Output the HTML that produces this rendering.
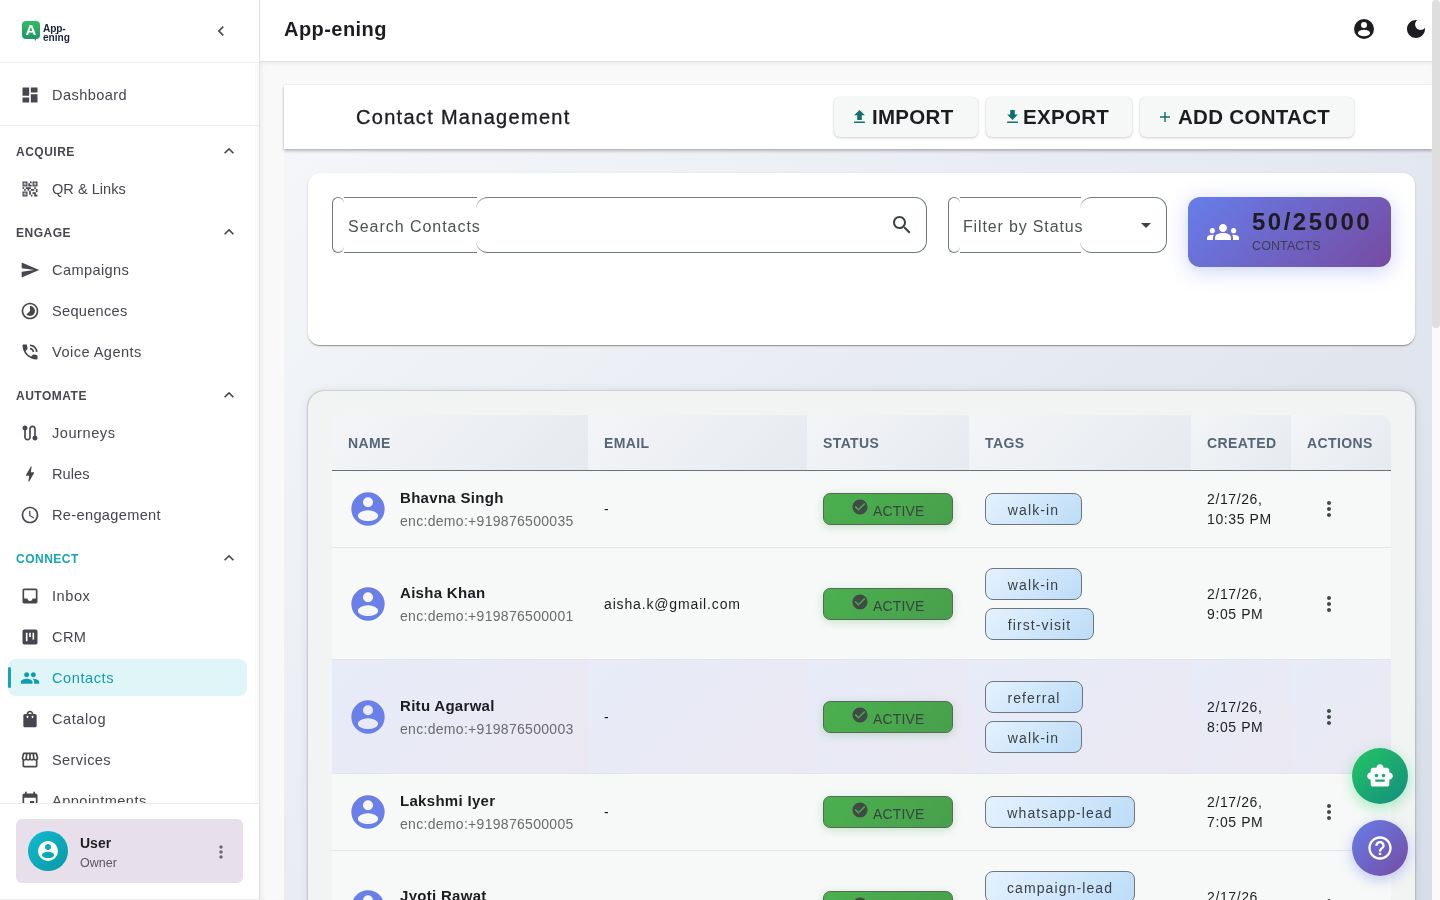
<!DOCTYPE html>
<html><head><meta charset="utf-8">
<style>
*{box-sizing:border-box;margin:0;padding:0}
html,body{width:1440px;height:900px;overflow:hidden;background:#fff;font-family:"Liberation Sans",sans-serif;}
svg{display:block}
.a{position:absolute}
#sb{position:absolute;left:0;top:0;width:260px;height:900px;background:#fff;border-right:1px solid #e2e2e2;overflow:hidden}
.it{position:absolute;left:0;width:259px;height:20px;color:#47454e;font-size:14.6px;line-height:20px;letter-spacing:0.3px}
.it svg{position:absolute;left:20px;top:0;width:20px;height:20px;fill:#47454e}
.it span{position:absolute;left:52px;top:0;white-space:nowrap}
.sec{position:absolute;left:16px;height:20px;line-height:22px;font-size:12px;font-weight:bold;letter-spacing:0.5px;color:#47454e}
.sec svg{position:absolute;left:203px;top:0px;width:20px;height:20px;fill:#47454e}
#main{position:absolute;left:260px;top:0;width:1172px;height:900px;background:#f9f9f9;overflow:hidden}
#hdr{position:absolute;left:0;top:0;width:1172px;height:62px;background:#fff;border-bottom:1px solid #e0e0e0}
#bg{position:absolute;left:24px;top:149px;width:1148px;height:751px;background:linear-gradient(135deg,#f4f6f9 0%,#d8dee9 100%)}
#cm{position:absolute;left:24px;top:85px;width:1148px;height:64px;background:#fff;box-shadow:0 2px 3px rgba(0,0,0,0.25),0 0 1px rgba(0,0,0,0.2)}
.btn{position:absolute;top:12px;height:40px;border-radius:6px;background:#f6f8f7;box-shadow:0 1px 3px rgba(0,0,0,0.18),0 0 1px rgba(0,0,0,0.12);font-size:20.5px;font-weight:bold;color:#1d1c21;letter-spacing:0.3px;line-height:39px}
.btn svg{position:absolute;fill:#0e6f6e}
.card{position:absolute;background:#fff;border-radius:12px;box-shadow:0px 2px 1px -1px rgba(0,0,0,0.2),0px 1px 1px 0px rgba(0,0,0,0.14),0px 1px 3px 0px rgba(0,0,0,0.12)}
.ol{position:absolute;border:1px solid #6f7b7a}
.th{position:absolute;top:0;height:55px;background:linear-gradient(135deg,#f3f5f8 0%,#e6e9ee 100%);font-size:14px;font-weight:bold;color:#556677;letter-spacing:0.4px;line-height:57px;padding-left:16px}
.row{position:absolute;left:0;width:1059px;border-bottom:1px solid #e2e5ec;background:#f7f9f8}
.av{position:absolute;left:16px;width:40px;height:40px;fill:#6a7fe7}
.nm{position:absolute;left:68px;font-size:15px;font-weight:bold;color:#1d1c21;letter-spacing:0.3px;white-space:nowrap}
.ph{position:absolute;left:68px;font-size:14px;color:#6b6b6b;letter-spacing:0.3px;white-space:nowrap}
.em{position:absolute;left:272px;font-size:14px;color:#1d1c21;letter-spacing:0.85px;white-space:nowrap}
.st{position:absolute;left:491px;width:130px;height:32px;border-radius:7px;background:linear-gradient(135deg,#4bb04e 0%,#47a04b 100%);border:1px solid #5f6360;box-shadow:0 2px 8px rgba(76,175,80,0.3)}
.st svg{position:absolute;left:27px;top:4px;width:18px;height:18px;fill:#424a48}
.st span{position:absolute;left:49px;top:9px;font-size:14px;line-height:16px;color:#3b4342;letter-spacing:0.15px}
.tg{position:absolute;left:653px;height:32px;border-radius:8px;border:1px solid #6b777d;background:linear-gradient(135deg,#e5f2fd 0%,#bcdcf8 100%);font-size:14px;color:#3a3f44;letter-spacing:1.1px;line-height:32px;text-align:center}
.dt{position:absolute;left:875px;font-size:14px;line-height:20px;color:#1d1c21;letter-spacing:0.6px;white-space:nowrap}
.mv{position:absolute;left:985px;width:24px;height:24px;fill:#404947}
</style></head><body><div style="position:absolute;left:0;top:0;width:1440px;height:900px;will-change:transform">
<!-- SIDEBAR -->
<div id="sb">
  <div class="a" style="left:0;top:0;width:259px;height:63px;border-bottom:1px solid #efefef"></div>
  <!-- logo -->
  <div class="a" style="left:22px;top:21px;width:18px;height:18px;border-radius:4px;background:linear-gradient(180deg,#33bb62,#1f9668)"></div>
  <div class="a" style="left:31px;top:35px;width:0;height:0;border-left:5px solid transparent;border-top:6px solid #1f9668"></div>
  <div class="a" style="left:22px;top:21px;width:18px;height:18px;color:#fff;font-weight:bold;font-size:15px;line-height:18px;text-align:center">A</div>
  <div class="a" style="left:43px;top:22px;font-size:12px;line-height:14px;font-weight:bold;color:#1a2340;letter-spacing:-0.2px;transform:scale(0.85,0.95);transform-origin:0 0">App-</div><div class="a" style="left:43px;top:30.5px;font-size:12px;line-height:14px;font-weight:bold;color:#1a2340;letter-spacing:-0.1px;transform:scale(0.85,0.95);transform-origin:0 0">ening</div>
  <svg class="a" style="left:211px;top:21px;width:20px;height:20px;fill:#465050" viewBox="0 0 24 24"><path d="M15.41 7.41L14 6l-6 6 6 6 1.41-1.41L10.83 12z"/></svg>

  <div class="a" style="left:255px;top:64px;width:4px;height:739px;background:#fafafa"></div>
  <div class="it" style="top:85px"><svg viewBox="0 0 24 24"><path d="M3 13h8V3H3v10zm0 8h8v-6H3v6zm10 0h8V11h-8v10zm0-18v6h8V3h-8z"/></svg><span style="letter-spacing:0.4px">Dashboard</span></div>
  <div class="a" style="left:0;top:125px;width:259px;height:1px;background:#ececec"></div>

  <div class="sec" style="top:141px">ACQUIRE<svg viewBox="0 0 24 24"><path d="M12 8l-6 6 1.41 1.41L12 10.83l4.59 4.58L18 14z"/></svg></div>
  <div class="it" style="top:179px"><svg viewBox="0 0 24 24"><path d="M15 21h-2v-2h2v2zm-2-7h-2v5h2v-5zm8-2h-2v4h2v-4zm-2-2h-2v2h2v-2zM7 12H5v2h2v-2zm-2-2H3v2h2v-2zm7-5h2V3h-2v2zm-7.5-.5v3h3v-3h-3zM9 9H3V3h6v6zm-4.5 7.5v3h3v-3h-3zM9 21H3v-6h6v6zm7.5-16.5v3h3v-3h-3zM21 9h-6V3h6v6zm-2 10v-3h-4v2h2v3h4v-2h-2zm-2-7h-4v2h4v-2zm-4-2H7v2h2v2h2v-2h2v-2zm1-1V7h-2V5h-2v4h4zM6.75 5.25h-1.5v1.5h1.5v-1.5zm0 12h-1.5v1.5h1.5v-1.5zm12-12h-1.5v1.5h1.5v-1.5z"/></svg><span style="letter-spacing:0px">QR &amp; Links</span></div>

  <div class="sec" style="top:222px">ENGAGE<svg viewBox="0 0 24 24"><path d="M12 8l-6 6 1.41 1.41L12 10.83l4.59 4.58L18 14z"/></svg></div>
  <div class="it" style="top:260px"><svg viewBox="0 0 24 24"><path d="M2.01 21L23 12 2.01 3 2 10l15 2-15 2z"/></svg><span style="letter-spacing:0.37px">Campaigns</span></div>
  <div class="it" style="top:301px"><svg viewBox="0 0 24 24"><path d="M16.24 7.76C15.07 6.59 13.54 6 12 6v6l-4.24 4.24c2.34 2.34 6.14 2.34 8.49 0 2.34-2.34 2.34-6.14-.01-8.48zM12 2C6.48 2 2 6.48 2 12s4.48 10 10 10 10-4.48 10-10S17.52 2 12 2zm0 18c-4.42 0-8-3.58-8-8s3.58-8 8-8 8 3.58 8 8-3.58 8-8 8z"/></svg><span style="letter-spacing:0.28px">Sequences</span></div>
  <div class="it" style="top:342px"><svg viewBox="0 0 24 24"><path d="M20 15.5c-1.25 0-2.45-.2-3.57-.57-.35-.11-.74-.03-1.02.24l-2.2 2.2c-2.83-1.44-5.15-3.75-6.59-6.59l2.2-2.21c.28-.26.36-.65.25-1C8.7 6.45 8.5 5.25 8.5 4c0-.55-.45-1-1-1H4c-.55 0-1 .45-1 1 0 9.39 7.61 17 17 17 .55 0 1-.45 1-1v-3.5c0-.55-.45-1-1-1zM19 12h2c0-4.97-4.03-9-9-9v2c3.87 0 7 3.13 7 7zm-4 0h2c0-2.76-2.24-5-5-5v2c1.66 0 3 1.34 3 3z"/></svg><span style="letter-spacing:0.45px">Voice Agents</span></div>

  <div class="sec" style="top:385px">AUTOMATE<svg viewBox="0 0 24 24"><path d="M12 8l-6 6 1.41 1.41L12 10.83l4.59 4.58L18 14z"/></svg></div>
  <div class="it" style="top:423px"><svg viewBox="0 0 24 24"><path d="M19 15.18V7c0-2.21-1.79-4-4-4s-4 1.79-4 4v10c0 1.1-.9 2-2 2s-2-.9-2-2V8.82C8.16 8.4 9 7.3 9 6c0-1.66-1.34-3-3-3S3 4.34 3 6c0 1.3.84 2.4 2 2.82V17c0 2.21 1.79 4 4 4s4-1.79 4-4V7c0-1.1.9-2 2-2s2 .9 2 2v8.18c-1.16.41-2 1.51-2 2.82 0 1.66 1.34 3 3 3s3-1.34 3-3c0-1.3-.84-2.4-2-2.82z"/></svg><span style="letter-spacing:0.53px">Journeys</span></div>
  <div class="it" style="top:464px"><svg viewBox="0 0 24 24"><path d="M11 21h-1l1-7H7.5c-.58 0-.57-.32-.38-.66.19-.34.05-.08.07-.12C8.48 10.94 10.42 7.54 13 3h1l-1 7h3.5c.49 0 .56.33.47.51l-.07.15C12.96 17.55 11 21 11 21z"/></svg><span style="letter-spacing:0.06px">Rules</span></div>
  <div class="it" style="top:505px"><svg viewBox="0 0 24 24"><path d="M11.99 2C6.47 2 2 6.48 2 12s4.47 10 9.99 10C17.52 22 22 17.52 22 12S17.52 2 11.99 2zM12 20c-4.42 0-8-3.58-8-8s3.58-8 8-8 8 3.58 8 8-3.58 8-8 8zm.5-13H11v6l5.25 3.15.75-1.23-4.5-2.67z"/></svg><span style="letter-spacing:0.33px">Re-engagement</span></div>

  <div class="sec" style="top:548px;color:#14a6b8;letter-spacing:0.5px">CONNECT<svg viewBox="0 0 24 24"><path d="M12 8l-6 6 1.41 1.41L12 10.83l4.59 4.58L18 14z"/></svg></div>
  <div class="it" style="top:586px"><svg viewBox="0 0 24 24"><path d="M19 3H4.99c-1.11 0-1.98.89-1.98 2L3 19c0 1.1.88 2 1.99 2H19c1.1 0 2-.9 2-2V5c0-1.11-.9-2-2-2zm0 12h-4c0 1.66-1.35 3-3 3s-3-1.34-3-3H4.99V5H19v10z"/></svg><span style="letter-spacing:0.55px">Inbox</span></div>
  <div class="it" style="top:627px"><svg viewBox="0 0 24 24"><path d="M19 3H5c-1.1 0-2 .9-2 2v14c0 1.1.9 2 2 2h14c1.1 0 2-.9 2-2V5c0-1.1-.9-2-2-2zM9 17H7V7h2v10zm4-5h-2V7h2v5zm4 3h-2V7h2v8z"/></svg><span style="letter-spacing:0.37px">CRM</span></div>
  <div class="a" style="left:8px;top:659px;width:239px;height:37px;border-radius:8px;background:#e0f5f8"></div>
  <div class="a" style="left:8px;top:667px;width:3px;height:21px;border-radius:2px;background:#14a6b8"></div>
  <div class="it" style="top:668px;color:#0f9db0"><svg viewBox="0 0 24 24" style="fill:#0f9db0"><path d="M16 11c1.66 0 2.99-1.34 2.99-3S17.66 5 16 5c-1.66 0-3 1.34-3 3s1.34 3 3 3zm-8 0c1.66 0 2.99-1.34 2.99-3S9.66 5 8 5C6.34 5 5 6.34 5 8s1.34 3 3 3zm0 2c-2.33 0-7 1.17-7 3.5V19h14v-2.5c0-2.33-4.67-3.5-7-3.5zm8 0c-.29 0-.62.02-.97.05 1.16.84 1.97 1.970 1.97 3.45V19h6v-2.5c0-2.33-4.67-3.5-7-3.5z"/></svg><span style="letter-spacing:0.55px">Contacts</span></div>
  <div class="it" style="top:709px"><svg viewBox="0 0 24 24"><path fill-rule="evenodd" d="M18 6h-2c0-2.21-1.79-4-4-4S8 3.79 8 6H6c-1.1 0-2 .9-2 2v12c0 1.1.9 2 2 2h12c1.1 0 2-.9 2-2V8c0-1.1-.9-2-2-2zm-8 4c0 .55-.45 1-1 1s-1-.45-1-1V8h2v2zm2-6c1.1 0 2 .9 2 2h-4c0-1.1.9-2 2-2zm4 6c0 .55-.45 1-1 1s-1-.45-1-1V8h2v2z"/></svg><span style="letter-spacing:0.55px">Catalog</span></div>
  <div class="it" style="top:750px"><svg viewBox="0 0 24 24"><path d="M21.9 8.89l-1.05-4.37c-.22-.9-1-1.52-1.91-1.52H5.05c-.9 0-1.69.63-1.9 1.52L2.1 8.89c-.24 1.02-.02 2.06.62 2.88.08.11.19.19.28.29V19c0 1.1.9 2 2 2h14c1.1 0 2-.9 2-2v-6.94c.09-.09.2-.18.28-.28.64-.82.87-1.87.62-2.89zm-2.99-3.9l1.05 4.37c.1.42.01.84-.25 1.17-.14.18-.44.47-.94.47-.61 0-1.14-.49-1.21-1.14L16.98 5l1.93-.01zM13 5h1.96l.54 4.52c.05.39-.07.78-.33 1.070-.22.26-.54.41-.95.41-.67 0-1.22-.59-1.22-1.31V5zM8.49 9.52L9.04 5H11v4.69c0 .72-.55 1.31-1.29 1.31-.34 0-.65-.15-.89-.41-.25-.29-.37-.68-.33-1.07zm-4.45-.16L5.05 5h1.97l-.58 4.86c-.08.65-.6 1.14-1.21 1.14-.49 0-.8-.29-.93-.47-.27-.32-.36-.75-.26-1.17zM5 19v-6.03c.08.01.15.03.23.03.87 0 1.66-.36 2.24-.95.6.6 1.4.95 2.31.95.87 0 1.65-.36 2.23-.93.59.57 1.39.93 2.29.93.84 0 1.64-.35 2.24-.95.58.59 1.37.95 2.24.95.08 0 .15-.02.23-.03V19H5z"/></svg><span style="letter-spacing:0.38px">Services</span></div>
  <div class="it" style="top:791px"><svg viewBox="0 0 24 24"><path d="M17 12h-5v5h5v-5zM16 1v2H8V1H6v2H5c-1.11 0-1.99.9-1.99 2L3 19c0 1.1.89 2 2 2h14c1.1 0 2-.9 2-2V5c0-1.1-.9-2-2-2h-1V1h-2zm3 18H5V8h14v11z"/></svg><span style="letter-spacing:0.45px">Appointments</span></div>

  <!-- footer -->
  <div class="a" style="left:0;top:803px;width:259px;height:97px;background:#fff;border-top:1px solid #ececec"></div>
  <div class="a" style="left:16px;top:819px;width:227px;height:64px;border-radius:6px;background:#e7dfea"></div>
  <div class="a" style="left:0;top:899px;width:259px;height:1px;background:#ececec"></div>
  <div class="a" style="left:28px;top:831px;width:40px;height:40px;border-radius:50%;background:linear-gradient(135deg,#10bccf,#0a97a6)"></div>
  <svg class="a" style="left:36px;top:839px;width:24px;height:24px;fill:#fff" viewBox="0 0 24 24"><path fill-rule="evenodd" d="M2 12a10 10 0 1 0 20 0a10 10 0 1 0 -20 0zM9 7.9a3 3 0 1 0 6 0a3 3 0 1 0 -6 0zM5.9 16a6.1 3.2 0 1 0 12.2 0a6.1 3.2 0 1 0 -12.2 0z"/></svg>
  <div class="a" style="left:80px;top:836px;font-size:14px;font-weight:bold;color:#1d1c21;line-height:14px">User</div>
  <div class="a" style="left:80px;top:856px;font-size:12.5px;color:#5b5962;line-height:14px">Owner</div>
  <svg class="a" style="left:211px;top:842px;width:20px;height:20px;fill:#6b6970" viewBox="0 0 24 24"><path d="M12 8c1.1 0 2-.9 2-2s-.9-2-2-2-2 .9-2 2 .9 2 2 2zm0 2c-1.1 0-2 .9-2 2s.9 2 2 2 2-.9 2-2-.9-2-2-2zm0 6c-1.1 0-2 .9-2 2s.9 2 2 2 2-.9 2-2-.9-2-2-2z"/></svg>
</div>

<!-- MAIN -->
<div id="main">
  <div id="hdr">
    <div class="a" style="left:24px;top:18px;font-size:20px;font-weight:bold;color:#1d1c21;line-height:22px;letter-spacing:0.45px">App-ening</div>
    <svg class="a" style="left:1092px;top:17px;width:24px;height:24px;fill:#1d1c21" viewBox="0 0 24 24"><path fill-rule="evenodd" d="M2 12a10 10 0 1 0 20 0a10 10 0 1 0 -20 0zM9 7.9a3 3 0 1 0 6 0a3 3 0 1 0 -6 0zM5.9 16a6.1 3.2 0 1 0 12.2 0a6.1 3.2 0 1 0 -12.2 0z"/></svg>
    <svg class="a" style="left:1144px;top:17px;width:24px;height:24px;fill:#1d1c21" viewBox="0 0 24 24"><path d="M12 3c-4.97 0-9 4.03-9 9s4.030 9 9 9 9-4.03 9-9c0-.46-.04-.92-.1-1.36-.98 1.37-2.58 2.26-4.4 2.26-2.98 0-5.4-2.42-5.4-5.4 0-1.81.89-3.42 2.26-4.4-.44-.06-.9-.1-1.36-.1z"/></svg>
  </div>
  <div class="a" style="left:0;top:62px;width:1172px;height:838px;box-shadow:inset 2px 2px 4px rgba(0,0,0,0.05)"></div>
  <div id="bg"></div>
  <div id="cm">
    <div class="a" style="left:72px;top:21px;font-size:20px;color:#1d1c21;letter-spacing:1.3px;line-height:22px;-webkit-text-stroke:0.35px #1d1c21">Contact Management</div>
    <div class="btn" style="left:550px;width:144px"><svg style="left:19px;top:13px;width:13px;height:13px" viewBox="5 3 14 17"><path d="M5 20h14v-2H5v2zm0-10h4v6h6v-6h4l-7-7-7 7z"/></svg><span class="a" style="left:38px;top:0">IMPORT</span></div>
    <div class="btn" style="left:702px;width:146px"><svg style="left:20px;top:13px;width:13px;height:13px" viewBox="5 3 14 17"><path d="M19 9h-4V3H9v6H5l7 7 7-7zM5 18v2h14v-2H5z"/></svg><span class="a" style="left:37px;top:0">EXPORT</span></div>
    <div class="btn" style="left:856px;width:214px"><svg style="left:20px;top:15px;width:10px;height:10px" viewBox="5 5 14 14"><path d="M19 13h-6v6h-2v-6H5v-2h6V5h2v6h6v2z"/></svg><span class="a" style="left:38px;top:0">ADD CONTACT</span></div>
  </div>

  <!-- search card -->
  <div class="card" style="left:48px;top:173px;width:1107px;height:172px"><div class="a" style="left:-1px;top:-1px;width:1107px;height:173px">
    <!-- search outline -->
    <div class="ol" style="left:25px;top:25px;width:12px;height:56px;border-right:none;border-radius:7px"></div>
    <div class="ol" style="left:37px;top:25px;width:133px;height:56px;border-left:none;border-right:none;border-radius:0"></div>
    <div class="ol" style="left:169px;top:25px;width:451px;height:56px;border-left:none;border-radius:12px"></div>
    <div class="a" style="left:41px;top:46px;font-size:16px;color:#4a5352;letter-spacing:0.97px;line-height:18px">Search Contacts</div>
    <svg class="a" style="left:583px;top:41px;width:24px;height:24px;fill:#3b4443" viewBox="0 0 24 24"><path d="M15.5 14h-.79l-.28-.27C15.41 12.59 16 11.11 16 9.5 16 5.91 13.09 3 9.5 3S3 5.910 3 9.5 5.91 16 9.5 16c1.61 0 3.09-.59 4.23-1.57l.27.28v.79l5 4.99L20.49 19l-4.99-5zm-6 0C7.01 14 5 11.99 5 9.5S7.01 5 9.5 5 14 7.01 14 9.5 11.99 14 9.5 14z"/></svg>
    <!-- filter outline -->
    <div class="ol" style="left:641px;top:25px;width:12px;height:56px;border-right:none;border-radius:7px"></div>
    <div class="ol" style="left:653px;top:25px;width:121px;height:56px;border-left:none;border-right:none;border-radius:0"></div>
    <div class="ol" style="left:773px;top:25px;width:87px;height:56px;border-left:none;border-radius:12px"></div>
    <div class="a" style="left:656px;top:46px;font-size:16px;color:#4a5352;letter-spacing:0.85px;line-height:18px">Filter by Status</div>
    <svg class="a" style="left:827px;top:41px;width:24px;height:24px;fill:#3b4443" viewBox="0 0 24 24"><path d="M7 10l5 5 5-5z"/></svg>
    <!-- contacts badge -->
    <div class="a" style="left:881px;top:25px;width:203px;height:70px;border-radius:12px;background:linear-gradient(135deg,#667eea 0%,#764ba2 100%);box-shadow:0 4px 20px rgba(102,126,234,0.35)">
      <svg class="a" style="left:19px;top:19px;width:32px;height:32px;fill:#fff" viewBox="0 0 24 24"><path d="M12 12.75c1.63 0 3.07.39 4.24.9 1.08.48 1.76 1.56 1.76 2.73V18H6v-1.61c0-1.18.68-2.26 1.76-2.73 1.17-.52 2.61-.91 4.24-.91zM4 13c1.1 0 2-.9 2-2s-.9-2-2-2-2 .9-2 2 .9 2 2 2zm1.13 1.1c-.37-.06-.74-.1-1.13-.1-.99 0-1.930.21-2.78.58C.48 14.9 0 15.62 0 16.43V18h4.5v-1.61c0-.83.23-1.61.63-2.29zM20 13c1.1 0 2-.9 2-2s-.9-2-2-2-2 .9-2 2 .9 2 2 2zm4 3.43c0-.81-.48-1.53-1.22-1.85-.85-.37-1.79-.58-2.78-.58-.39 0-.76.04-1.13.1.4.68.63 1.46.63 2.29V18H24v-1.57zM12 6c1.66 0 3 1.34 3 3s-1.34 3-3 3-3-1.34-3-3 1.34-3 3-3z"/></svg>
      <div class="a" style="left:64px;top:12px;font-size:24px;font-weight:bold;color:#1d1c21;letter-spacing:2.5px;line-height:26px">50/25000</div>
      <div class="a" style="left:64px;top:42.5px;font-size:12.5px;color:#3f3d55;letter-spacing:0.1px;line-height:12px">CONTACTS</div>
    </div>
  </div></div>

  <!-- table card -->
  <div class="card" style="left:48px;top:391px;width:1107px;height:600px;background:#f2f4f3;border-radius:16px;box-shadow:0 0 1.5px rgba(0,0,0,0.45),0 0 10px rgba(0,0,0,0.1),0 2px 3px rgba(0,0,0,0.08)">
    <div class="a" style="left:24px;top:24px;width:1059px;height:600px;overflow:hidden">
      <div class="a" style="left:0;top:0;width:1059px;height:56px;border-radius:12px 12px 0 0;overflow:hidden;border-bottom:1px solid #66737a">
        <div class="th" style="left:0;width:256px">NAME</div>
        <div class="th" style="left:256px;width:219px">EMAIL</div>
        <div class="th" style="left:475px;width:162px">STATUS</div>
        <div class="th" style="left:637px;width:222px">TAGS</div>
        <div class="th" style="left:859px;width:100px">CREATED</div>
        <div class="th" style="left:959px;width:100px">ACTIONS</div>
      </div>
      <div id="rows"><div class="row" style="top:56px;height:77px"><svg class="av" style="top:18px" viewBox="0 0 24 24"><path fill-rule="evenodd" d="M2 12a10 10 0 1 0 20 0a10 10 0 1 0 -20 0zM9 7.9a3 3 0 1 0 6 0a3 3 0 1 0 -6 0zM5.9 16a6.1 3.2 0 1 0 12.2 0a6.1 3.2 0 1 0 -12.2 0z"/></svg><div class="nm" style="top:18px;line-height:18px">Bhavna Singh</div><div class="ph" style="top:42px;line-height:16px">enc:demo:+919876500035</div><div class="em" style="top:30px;line-height:16px">-</div><div class="st" style="top:22px"><svg viewBox="0 0 24 24"><path d="M12 2C6.48 2 2 6.48 2 12s4.48 10 10 10 10-4.48 10-10S17.52 2 12 2zm-2 15l-5-5 1.41-1.41L10 14.17l7.59-7.59L19 8l-9 9z"/></svg><span>ACTIVE</span></div><div class="tg" style="top:22px;width:97px">walk-in</div><div class="dt" style="top:18px">2/17/26,<br>10:35 PM</div><svg class="mv" style="top:26px" viewBox="0 0 24 24"><path d="M12 8c1.1 0 2-.9 2-2s-.9-2-2-2-2 .9-2 2 .9 2 2 2zm0 2c-1.1 0-2 .9-2 2s.9 2 2 2 2-.9 2-2-.9-2-2-2zm0 6c-1.1 0-2 .9-2 2s.9 2 2 2 2-.9 2-2-.9-2-2-2z"/></svg></div>
<div class="row" style="top:133px;height:112px"><svg class="av" style="top:36px" viewBox="0 0 24 24"><path fill-rule="evenodd" d="M2 12a10 10 0 1 0 20 0a10 10 0 1 0 -20 0zM9 7.9a3 3 0 1 0 6 0a3 3 0 1 0 -6 0zM5.9 16a6.1 3.2 0 1 0 12.2 0a6.1 3.2 0 1 0 -12.2 0z"/></svg><div class="nm" style="top:36px;line-height:18px">Aisha Khan</div><div class="ph" style="top:60px;line-height:16px">enc:demo:+919876500001</div><div class="em" style="top:48px;line-height:16px">aisha.k@gmail.com</div><div class="st" style="top:40px"><svg viewBox="0 0 24 24"><path d="M12 2C6.48 2 2 6.48 2 12s4.48 10 10 10 10-4.48 10-10S17.52 2 12 2zm-2 15l-5-5 1.41-1.41L10 14.17l7.59-7.59L19 8l-9 9z"/></svg><span>ACTIVE</span></div><div class="tg" style="top:20px;width:97px">walk-in</div><div class="tg" style="top:60px;width:109px">first-visit</div><div class="dt" style="top:36px">2/17/26,<br>9:05 PM</div><svg class="mv" style="top:44px" viewBox="0 0 24 24"><path d="M12 8c1.1 0 2-.9 2-2s-.9-2-2-2-2 .9-2 2 .9 2 2 2zm0 2c-1.1 0-2 .9-2 2s.9 2 2 2 2-.9 2-2-.9-2-2-2zm0 6c-1.1 0-2 .9-2 2s.9 2 2 2 2-.9 2-2-.9-2-2-2z"/></svg></div>
<div class="row" style="top:245px;height:114px"><div class="a" style="left:0px;top:0;width:256px;height:113px;background:linear-gradient(135deg,#e7ecf8 0%,#ebe8f3 100%)"></div><div class="a" style="left:256px;top:0;width:219px;height:113px;background:linear-gradient(135deg,#e7ecf8 0%,#ebe8f3 100%)"></div><div class="a" style="left:475px;top:0;width:162px;height:113px;background:linear-gradient(135deg,#e7ecf8 0%,#ebe8f3 100%)"></div><div class="a" style="left:637px;top:0;width:222px;height:113px;background:linear-gradient(135deg,#e7ecf8 0%,#ebe8f3 100%)"></div><div class="a" style="left:859px;top:0;width:100px;height:113px;background:linear-gradient(135deg,#e7ecf8 0%,#ebe8f3 100%)"></div><div class="a" style="left:959px;top:0;width:100px;height:113px;background:linear-gradient(135deg,#e7ecf8 0%,#ebe8f3 100%)"></div><svg class="av" style="top:37px" viewBox="0 0 24 24"><path fill-rule="evenodd" d="M2 12a10 10 0 1 0 20 0a10 10 0 1 0 -20 0zM9 7.9a3 3 0 1 0 6 0a3 3 0 1 0 -6 0zM5.9 16a6.1 3.2 0 1 0 12.2 0a6.1 3.2 0 1 0 -12.2 0z"/></svg><div class="nm" style="top:37px;line-height:18px">Ritu Agarwal</div><div class="ph" style="top:61px;line-height:16px">enc:demo:+919876500003</div><div class="em" style="top:49px;line-height:16px">-</div><div class="st" style="top:41px"><svg viewBox="0 0 24 24"><path d="M12 2C6.48 2 2 6.48 2 12s4.48 10 10 10 10-4.48 10-10S17.52 2 12 2zm-2 15l-5-5 1.41-1.41L10 14.17l7.59-7.59L19 8l-9 9z"/></svg><span>ACTIVE</span></div><div class="tg" style="top:21px;width:98px">referral</div><div class="tg" style="top:61px;width:97px">walk-in</div><div class="dt" style="top:37px">2/17/26,<br>8:05 PM</div><svg class="mv" style="top:45px" viewBox="0 0 24 24"><path d="M12 8c1.1 0 2-.9 2-2s-.9-2-2-2-2 .9-2 2 .9 2 2 2zm0 2c-1.1 0-2 .9-2 2s.9 2 2 2 2-.9 2-2-.9-2-2-2zm0 6c-1.1 0-2 .9-2 2s.9 2 2 2 2-.9 2-2-.9-2-2-2z"/></svg></div>
<div class="row" style="top:359px;height:77px"><svg class="av" style="top:18px" viewBox="0 0 24 24"><path fill-rule="evenodd" d="M2 12a10 10 0 1 0 20 0a10 10 0 1 0 -20 0zM9 7.9a3 3 0 1 0 6 0a3 3 0 1 0 -6 0zM5.9 16a6.1 3.2 0 1 0 12.2 0a6.1 3.2 0 1 0 -12.2 0z"/></svg><div class="nm" style="top:18px;line-height:18px">Lakshmi Iyer</div><div class="ph" style="top:42px;line-height:16px">enc:demo:+919876500005</div><div class="em" style="top:30px;line-height:16px">-</div><div class="st" style="top:22px"><svg viewBox="0 0 24 24"><path d="M12 2C6.48 2 2 6.48 2 12s4.48 10 10 10 10-4.48 10-10S17.52 2 12 2zm-2 15l-5-5 1.41-1.41L10 14.17l7.59-7.59L19 8l-9 9z"/></svg><span>ACTIVE</span></div><div class="tg" style="top:22px;width:150px">whatsapp-lead</div><div class="dt" style="top:18px">2/17/26,<br>7:05 PM</div><svg class="mv" style="top:26px" viewBox="0 0 24 24"><path d="M12 8c1.1 0 2-.9 2-2s-.9-2-2-2-2 .9-2 2 .9 2 2 2zm0 2c-1.1 0-2 .9-2 2s.9 2 2 2 2-.9 2-2-.9-2-2-2zm0 6c-1.1 0-2 .9-2 2s.9 2 2 2 2-.9 2-2-.9-2-2-2z"/></svg></div>
<div class="row" style="top:436px;height:112px"><svg class="av" style="top:36px" viewBox="0 0 24 24"><path fill-rule="evenodd" d="M2 12a10 10 0 1 0 20 0a10 10 0 1 0 -20 0zM9 7.9a3 3 0 1 0 6 0a3 3 0 1 0 -6 0zM5.9 16a6.1 3.2 0 1 0 12.2 0a6.1 3.2 0 1 0 -12.2 0z"/></svg><div class="nm" style="top:36px;line-height:18px">Jyoti Rawat</div><div class="ph" style="top:60px;line-height:16px">enc:demo:+919876500007</div><div class="em" style="top:48px;line-height:16px">-</div><div class="st" style="top:40px"><svg viewBox="0 0 24 24"><path d="M12 2C6.48 2 2 6.48 2 12s4.48 10 10 10 10-4.48 10-10S17.52 2 12 2zm-2 15l-5-5 1.41-1.41L10 14.17l7.59-7.59L19 8l-9 9z"/></svg><span>ACTIVE</span></div><div class="tg" style="top:20px;width:150px">campaign-lead</div><div class="tg" style="top:60px;width:97px">walk-in</div><div class="dt" style="top:36px">2/17/26,<br>6:05 PM</div><svg class="mv" style="top:44px" viewBox="0 0 24 24"><path d="M12 8c1.1 0 2-.9 2-2s-.9-2-2-2-2 .9-2 2 .9 2 2 2zm0 2c-1.1 0-2 .9-2 2s.9 2 2 2 2-.9 2-2-.9-2-2-2zm0 6c-1.1 0-2 .9-2 2s.9 2 2 2 2-.9 2-2-.9-2-2-2z"/></svg></div></div><!--/rows-->
    </div>
  </div>
</div>

<!-- FABs -->
<div class="a" style="left:1352px;top:748px;width:56px;height:56px;border-radius:50%;background:linear-gradient(135deg,#25c663 0%,#128c7e 100%);box-shadow:0 4px 14px rgba(37,211,102,0.4)">
  <svg class="a" style="left:14px;top:14px;width:28px;height:28px;fill:#fff" viewBox="0 0 24 24"><path d="M20 9V7c0-1.1-.9-2-2-2h-3c0-1.66-1.34-3-3-3S9 3.34 9 5H6c-1.1 0-2 .9-2 2v2c-1.66 0-3 1.34-3 3s1.34 3 3 3v4c0 1.1.9 2 2 2h12c1.1 0 2-.9 2-2v-4c1.66 0 3-1.34 3-3s-1.34-3-3-3zM7.5 11.5c0-.83.67-1.5 1.5-1.5s1.5.67 1.5 1.5S9.83 13 9 13s-1.5-.67-1.5-1.5zM16 17H8v-2h8v2zm-1-4c-.83 0-1.5-.67-1.5-1.5S14.17 10 15 10s1.5.67 1.5 1.5S15.83 13 15 13z"/></svg>
</div>
<div class="a" style="left:1352px;top:820px;width:56px;height:56px;border-radius:50%;background:linear-gradient(135deg,#667eea 0%,#764ba2 100%);box-shadow:0 4px 14px rgba(102,126,234,0.4)">
  <svg class="a" style="left:14px;top:14px;width:28px;height:28px;fill:#fff" viewBox="0 0 24 24"><path d="M11 18h2v-2h-2v2zm1-16C6.48 2 2 6.48 2 12s4.48 10 10 10 10-4.48 10-10S17.52 2 12 2zm0 18c-4.41 0-8-3.59-8-8s3.59-8 8-8 8 3.59 8 8-3.59 8-8 8zm0-14c-2.21 0-4 1.79-4 4h2c0-1.1.9-2 2-2s2 .9 2 2c0 2-3 1.75-3 5h2c0-2.25 3-2.5 3-5 0-2.21-1.79-4-4-4z"/></svg>
</div>
<!-- scrollbar -->
<div class="a" style="left:1432px;top:0;width:8px;height:900px;background:#fafafa"></div>
<div class="a" style="left:1432px;top:0;width:8px;height:328px;border-radius:4px;background:#dedede"></div>
</div></body></html>
